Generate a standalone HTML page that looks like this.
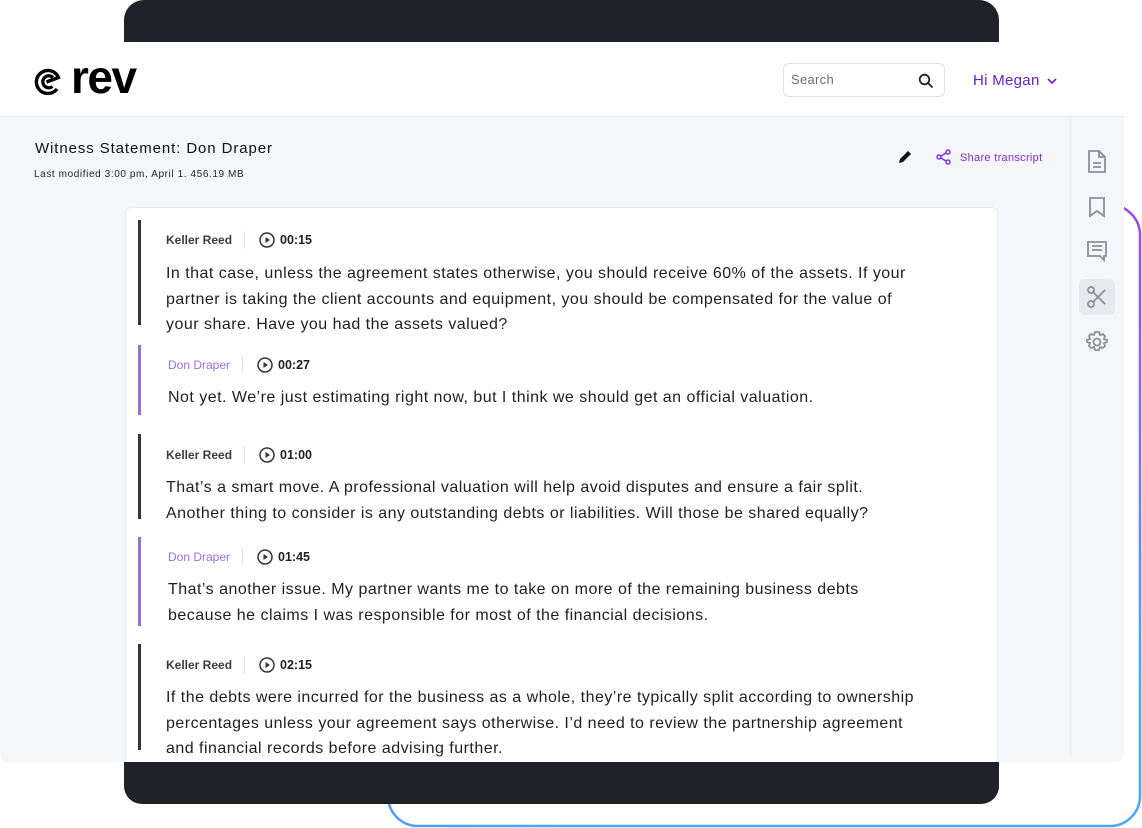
<!DOCTYPE html>
<html><head><meta charset="utf-8"><style>
*{margin:0;padding:0;box-sizing:border-box}
body{width:1142px;height:828px;background:#fff;position:relative;overflow:hidden;font-family:"Liberation Sans",sans-serif;color:#1e1f25}
.abs{position:absolute}
.dark{background:#1f212a}
.blk{position:absolute;left:138px;border-left:3px solid #33353d}
.blk.dd{border-left-color:#9b6fe0}
.hd{position:absolute;left:25px;top:0;font-size:12px;font-weight:bold;color:#3a3c44;display:flex;align-items:center;height:20px;white-space:nowrap}
.dd .hd{color:#9b6fe0;font-weight:normal}
.sep{width:1px;height:18px;background:#e3e4e8;margin:0 14px 0 12px}
.ts{display:flex;align-items:center;gap:5px;color:#1e1f25;font-weight:bold;font-size:12.5px}
.ts svg{display:block}
.tx{position:absolute;left:25px;font-size:16px;line-height:25.5px;color:#1e1f25;white-space:nowrap;letter-spacing:0.48px}
</style></head><body>
<svg class="abs" style="left:0;top:0" width="1142" height="828">
<defs><linearGradient id="g" x1="0" y1="0" x2="0.3" y2="1"><stop offset="0" stop-color="#b32de0"/><stop offset="0.6" stop-color="#7a6ff0"/><stop offset="1" stop-color="#4aa8f6"/></linearGradient></defs>
<rect x="388" y="205" width="752" height="621" rx="30" fill="none" stroke="url(#g)" stroke-width="2.5"/>
</svg>
<div class="abs dark" style="left:124px;top:0;width:875px;height:60px;border-radius:20px 20px 0 0"></div>
<div class="abs" style="left:0;top:42px;width:1124px;height:720px;background:#f5f6f9;border-radius:0 0 8px 8px"></div>
<div class="abs" style="left:0;top:42px;width:1124px;height:75px;background:#fff;border-bottom:1px solid #e8e9ee"></div>
<svg class="abs" style="left:34px;top:68px" width="28" height="28" viewBox="0 0 28 28"><path d="M23 21 A11.5 11.5 0 1 1 24.5 9.5 L12.5 14" fill="none" stroke="#000" stroke-width="3.4"/><path d="M18.5 18.5 A6 6 0 1 1 19 9.5" fill="none" stroke="#000" stroke-width="3.2"/></svg>
<div class="abs" style="left:71px;top:54px;font-size:46px;line-height:1;font-weight:bold;letter-spacing:-1.5px;color:#000">rev</div>
<div class="abs" style="left:783px;top:63px;width:162px;height:34px;border:1px solid #e0e1e6;border-radius:6px;background:#fff"></div>
<div class="abs" style="left:791px;top:72px;font-size:13px;color:#6b6d75;letter-spacing:0.3px">Search</div>
<svg class="abs" style="left:918px;top:73px" width="16" height="16" viewBox="0 0 16 16"><circle cx="6.5" cy="6.5" r="4.8" fill="none" stroke="#222" stroke-width="1.8"/><path d="M10 10l4.5 4.5" stroke="#222" stroke-width="1.8"/></svg>
<div class="abs" style="left:973px;top:72px;font-size:15px;color:#6a1fd0;letter-spacing:0.3px">Hi Megan</div>
<svg class="abs" style="left:1046px;top:77px" width="12" height="8"><path d="M2 2l4 4 4-4" fill="none" stroke="#6a1fd0" stroke-width="1.6"/></svg>
<div class="abs" style="left:35px;top:140px;font-size:15px;color:#111;letter-spacing:0.9px">Witness Statement: Don Draper</div>
<div class="abs" style="left:34px;top:169px;font-size:10px;color:#222;letter-spacing:0.6px">Last modified 3:00 pm, April 1. 456.19 MB</div>
<svg class="abs" style="left:897px;top:149px" width="16" height="16" viewBox="0 0 16 16"><path d="M2 14l1-4 8-8 3 3-8 8z" fill="#111"/></svg>
<svg class="abs" style="left:936px;top:149px" width="16" height="16" viewBox="0 0 16 16"><circle cx="3" cy="8" r="2" fill="none" stroke="#7a2fe0" stroke-width="1.4"/><circle cx="12" cy="3" r="2" fill="none" stroke="#7a2fe0" stroke-width="1.4"/><circle cx="12" cy="13" r="2" fill="none" stroke="#7a2fe0" stroke-width="1.4"/><path d="M5 7l5-3M5 9l5 3" stroke="#7a2fe0" stroke-width="1.4"/></svg>
<div class="abs" style="left:960px;top:152px;font-size:11px;color:#7a2fe0;letter-spacing:0.3px">Share transcript</div>
<div class="abs" style="left:1070px;top:117px;width:54px;height:637px;background:#f5f6f9;border-left:1px solid #e6e7ec"></div>
<div class="abs" style="left:1079px;top:279px;width:36px;height:36px;border-radius:6px;background:#e8e9ee"></div>
<svg class="abs" style="left:1084px;top:148px" width="26" height="210" viewBox="0 0 26 210" fill="none" stroke="#8d8f96" stroke-width="1.8">
<path d="M5 3h10l6 6v15H5z M15 3v6h6 M9 15h8 M9 19h8"/>
<path d="M6 50h14v18l-7-5-7 5z"/>
<path d="M4 94h18v14h-2v4l-4-4H4z M8 98h10 M8 102h10"/>
<circle cx="7" cy="142" r="3"/><circle cx="7" cy="156" r="3"/><path d="M9 144l12 12 M9 154l12-12"/>
<circle cx="13" cy="194" r="3.5"/><path d="M13 184l2 0 1 3 3-1 2 2-1 3 3 1v2l-3 1 1 3-2 2-3-1-1 3h-4l-1-3-3 1-2-2 1-3-3-1v-2l3-1-1-3 2-2 3 1 1-3z"/>
</svg>
<div class="abs" style="left:125px;top:207px;width:873px;height:560px;background:#fff;border:1px solid #e8e9ee;border-radius:6px"></div>

<div class="blk" style="top:220px;height:105px"><div class="hd" style="top:10px">Keller Reed<div class="sep"></div><div class="ts"><svg width="16" height="16"><circle cx="8" cy="8" r="7" fill="none" stroke="#33353d" stroke-width="1.5"/><path d="M6.5 5v6l4.5-3z" fill="#33353d"/></svg>00:15</div></div>
<div class="tx" style="top:41px">In that case, unless the agreement states otherwise, you should receive 60% of the assets. If your<br>partner is taking the client accounts and equipment, you should be compensated for the value of<br>your share. Have you had the assets valued?</div></div>

<div class="blk dd" style="top:345px;height:70px"><div class="hd" style="left:27px;top:10px">Don Draper<div class="sep"></div><div class="ts"><svg width="16" height="16"><circle cx="8" cy="8" r="7" fill="none" stroke="#33353d" stroke-width="1.5"/><path d="M6.5 5v6l4.5-3z" fill="#33353d"/></svg>00:27</div></div>
<div class="tx" style="left:27px;top:40px">Not yet. We’re just estimating right now, but I think we should get an official valuation.</div></div>

<div class="blk" style="top:434px;height:85px"><div class="hd" style="top:11px">Keller Reed<div class="sep"></div><div class="ts"><svg width="16" height="16"><circle cx="8" cy="8" r="7" fill="none" stroke="#33353d" stroke-width="1.5"/><path d="M6.5 5v6l4.5-3z" fill="#33353d"/></svg>01:00</div></div>
<div class="tx" style="top:41px">That’s a smart move. A professional valuation will help avoid disputes and ensure a fair split.<br>Another thing to consider is any outstanding debts or liabilities. Will those be shared equally?</div></div>

<div class="blk dd" style="top:537px;height:89px"><div class="hd" style="left:27px;top:10px">Don Draper<div class="sep"></div><div class="ts"><svg width="16" height="16"><circle cx="8" cy="8" r="7" fill="none" stroke="#33353d" stroke-width="1.5"/><path d="M6.5 5v6l4.5-3z" fill="#33353d"/></svg>01:45</div></div>
<div class="tx" style="left:27px;top:40px">That’s another issue. My partner wants me to take on more of the remaining business debts<br>because he claims I was responsible for most of the financial decisions.</div></div>

<div class="blk" style="top:644px;height:106px"><div class="hd" style="top:11px">Keller Reed<div class="sep"></div><div class="ts"><svg width="16" height="16"><circle cx="8" cy="8" r="7" fill="none" stroke="#33353d" stroke-width="1.5"/><path d="M6.5 5v6l4.5-3z" fill="#33353d"/></svg>02:15</div></div>
<div class="tx" style="top:41px">If the debts were incurred for the business as a whole, they’re typically split according to ownership<br>percentages unless your agreement says otherwise. I’d need to review the partnership agreement<br>and financial records before advising further.</div></div>
<div class="abs dark" style="left:124px;top:762px;width:875px;height:42px;border-radius:0 0 18px 18px"></div>
</body></html>
